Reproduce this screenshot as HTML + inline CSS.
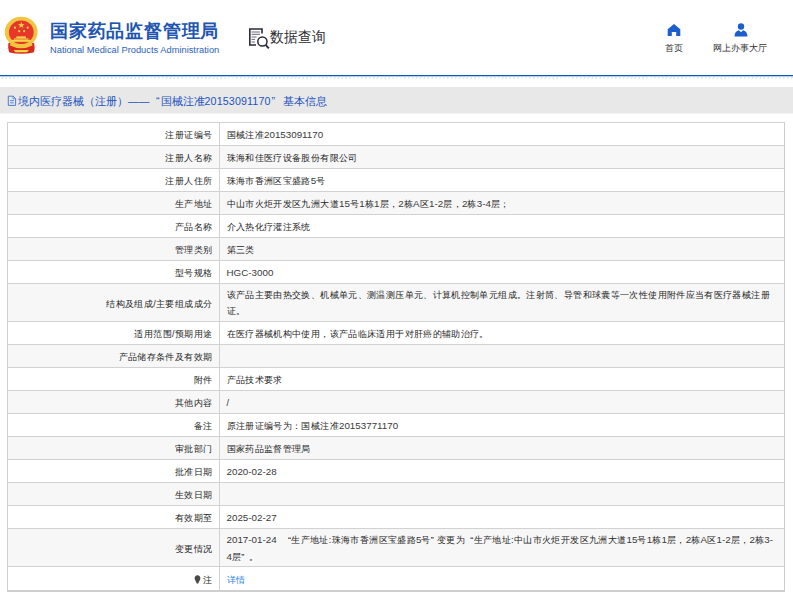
<!DOCTYPE html>
<html><head><meta charset="utf-8">
<style>
*{margin:0;padding:0;box-sizing:border-box}
html,body{width:793px;height:597px;overflow:hidden;background:#fff;font-family:"Liberation Sans",sans-serif;color:#333}
.a{position:absolute;white-space:nowrap}
.emblem{position:absolute;left:4px;top:17px;width:35px;height:38px}
.t1{left:50px;top:18.5px;font-size:18px;letter-spacing:0.8px;font-weight:bold;color:#2155b0;line-height:24px}
.t2{left:50px;top:45px;font-size:9.32px;color:#2d62b8;line-height:11px}
.sq{position:absolute;left:244px;top:22px;width:30px;height:30px}
.sqt{left:270px;top:25px;font-size:14px;color:#2c2c30;line-height:20px;transform:scaleY(1.1);transform-origin:0 0}
.nav{top:42px;font-size:9.33px;color:#333;line-height:12px}
.line{position:absolute;left:0;top:75px;width:793px;height:1px;background:#0a5cc0;box-shadow:0 1px 0 rgba(10,92,192,0.3)}
.hatch{position:absolute;left:0;top:77px;width:793px;height:2px;background:repeating-linear-gradient(125deg,#fff 0 2px,#e8e8e8 2px 3.2px)}
.crumb{position:absolute;left:0;top:87px;width:793px;height:26px;background:#e8e8e8;box-shadow:0 1px 0 #f3f3f3}
.cr{top:8px;font-size:10.67px;color:#1b52c0;line-height:12px}
.tbl{position:absolute;left:7px;top:122px;width:778px;height:469px;border:1px solid #cfcfcf;border-top-width:1px}
.r{position:absolute;left:7px;width:777px;border-top:1px solid #d2d2d2;font-size:9px;letter-spacing:0.37px;color:#262626}
.k{position:absolute;left:0;top:0;width:212.5px;border-right:1px solid #d2d2d2;text-align:right;padding-right:6.2px;display:flex;align-items:center;justify-content:flex-end;white-space:nowrap}
.v{position:absolute;left:212.5px;top:0;width:565px;padding-left:7px;display:flex;align-items:center;line-height:15.6px;white-space:nowrap}
.k>div,.v>div{position:relative;top:1px}
.lnk{color:#2a7fe8}
.n{font-size:9.8px;letter-spacing:0;color:#3a3a3a}
.pin{width:7px;height:9px;margin-right:1.5px;vertical-align:middle;position:relative;top:-1px}
.tb{position:absolute;left:7px;top:590px;width:778px;height:2px;background:#cfcfcf}
.tl{position:absolute;left:7px;top:122px;width:1px;height:470px;background:#cfcfcf}
.trr{position:absolute;left:784px;top:122px;width:1px;height:470px;background:#cdcdcd}
</style></head><body>
<svg style="position:absolute;left:2px;top:14px" width="40" height="42" viewBox="2 14 40 42">
  <path d="M8.5 43 Q7.5 49 9.5 52.5 Q21.3 55 33.5 52.5 Q35.5 49 34 43 Z" fill="#dc2a1f"/>
  <ellipse cx="21.2" cy="32" rx="16.4" ry="15.2" fill="#f1c53f"/>
  <ellipse cx="21.3" cy="32.3" rx="12.4" ry="11.8" fill="#e7372a"/>
  <path d="M21.3 21.8l0.85 2.35h2.5l-2 1.5 0.75 2.4-2.1-1.5-2.1 1.5 0.75-2.4-2-1.5h2.5z" fill="#f7d648"/>
  <circle cx="15" cy="27.7" r="1.1" fill="#f7d648"/><circle cx="27.7" cy="27.7" r="1.1" fill="#f7d648"/>
  <circle cx="19.2" cy="31.2" r="1.1" fill="#f7d648"/><circle cx="24.1" cy="31.2" r="1.1" fill="#f7d648"/>
  <rect x="16.4" y="36.4" width="9.5" height="2" fill="#f7d648"/>
  <rect x="14" y="38.3" width="14.5" height="1.4" fill="#f3b94a"/>
  <rect x="11.8" y="39.8" width="19" height="2" fill="#f7d648"/>
  <path d="M10.5 43 Q21.3 48.5 32 43 L32.5 45.5 Q21.3 51 10 45.5Z" fill="#f1c53f"/>
  <path d="M13.5 50 h15.5 l-2 2.3 h-11.5z" fill="#f7d648"/>
</svg>
<div class="a t1">国家药品监督管理局</div>
<div class="a t2">National Medical Products Administration</div>
<svg class="sq" viewBox="244 22 30 30">
  <path d="M256 45H249.8V29H262V33.5" fill="none" stroke="#2b2b3b" stroke-width="1.6"/>
  <path d="M251.5 32h8.5M251.5 34.3h8.5M251.5 37h5M251.5 39.4h3.5M251.5 42h3.5" stroke="#5a5a68" stroke-width="0.9"/>
  <circle cx="262.4" cy="41.5" r="4.6" fill="none" stroke="#2b2b3b" stroke-width="1.5"/>
  <path d="M265.6 44.8L268.8 48.3" stroke="#2b2b3b" stroke-width="1.9"/>
</svg>
<div class="a sqt">数据查询</div>
<svg style="position:absolute;left:667px;top:23px" width="14" height="14" viewBox="667 23 14 14">
  <path d="M674 24L680.3 29.2V36H676.2V31.9H671.8V36H667.7V29.2Z" fill="#1c5fcc"/>
</svg>
<div class="a nav" style="left:664.5px">首页</div>
<svg style="position:absolute;left:733px;top:22px" width="16" height="16" viewBox="733 22 16 16">
  <circle cx="741" cy="26.5" r="3.2" fill="#1c5fcc"/>
  <path d="M734.5 36.5Q734.7 31 739 30.3L741 32.3L743 30.3Q747.3 31 747.5 36.5Z" fill="#1c5fcc"/>
</svg>
<div class="a nav" style="left:712.5px">网上办事大厅</div>
<div class="line"></div>
<div class="hatch"></div>
<div class="crumb">
  <svg style="position:absolute;left:6px;top:7px" width="12" height="13" viewBox="6 94 12 13">
    <path d="M8.3 96.2H13.2L15.6 98.6V105.4H8.3Z" fill="none" stroke="#4d7bd6" stroke-width="1"/>
    <path d="M13 96.2V98.8H15.6" fill="none" stroke="#4d7bd6" stroke-width="0.8"/>
    <path d="M10 100.6H13.9M10 102.8H13.9" stroke="#4d7bd6" stroke-width="0.9"/>
  </svg>
  <div class="a cr" style="left:18px">境内医疗器械（注册）——</div><div class="a cr" style="left:156px">“</div><div class="a cr" style="left:160.5px">国械注准<span style="letter-spacing:0.15px">20153091170</span></div><div class="a cr" style="left:271.5px">”</div><div class="a cr" style="left:282.5px">基本信息</div>
</div>
<div class="r" style="top:122px;height:23px;background:#fff"><div class="k" style="height:23px"><div>注册证编号</div></div><div class="v" style="height:23px"><div>国械注准<span class=n>20153091170</span></div></div></div>
<div class="r" style="top:145px;height:23px;background:#f7f7f7"><div class="k" style="height:23px"><div>注册人名称</div></div><div class="v" style="height:23px"><div>珠海和佳医疗设备股份有限公司</div></div></div>
<div class="r" style="top:168px;height:23px;background:#fff"><div class="k" style="height:23px"><div>注册人住所</div></div><div class="v" style="height:23px"><div>珠海市香洲区宝盛路<span class=n>5</span>号</div></div></div>
<div class="r" style="top:191px;height:23px;background:#f7f7f7"><div class="k" style="height:23px"><div>生产地址</div></div><div class="v" style="height:23px"><div>中山市火炬开发区九洲大道<span class=n>15</span>号<span class=n>1</span>栋<span class=n>1</span>层，<span class=n>2</span>栋<span class=n>A</span>区<span class=n>1-2</span>层，<span class=n>2</span>栋<span class=n>3-4</span>层；</div></div></div>
<div class="r" style="top:214px;height:23px;background:#fff"><div class="k" style="height:23px"><div>产品名称</div></div><div class="v" style="height:23px"><div>介入热化疗灌注系统</div></div></div>
<div class="r" style="top:237px;height:23px;background:#f7f7f7"><div class="k" style="height:23px"><div>管理类别</div></div><div class="v" style="height:23px"><div>第三类</div></div></div>
<div class="r" style="top:260px;height:23px;background:#fff"><div class="k" style="height:23px"><div>型号规格</div></div><div class="v" style="height:23px"><div><span class=n>HGC-3000</span></div></div></div>
<div class="r" style="top:283px;height:38px;background:#f7f7f7"><div class="k" style="height:38px"><div>结构及组成/主要组成成分</div></div><div class="v" style="height:38px"><div>该产品主要由热交换、机械单元、测温测压单元、计算机控制单元组成。注射筒、导管和球囊等一次性使用附件应当有医疗器械注册<br>证。</div></div></div>
<div class="r" style="top:321px;height:23px;background:#fff"><div class="k" style="height:23px"><div>适用范围/预期用途</div></div><div class="v" style="height:23px"><div>在医疗器械机构中使用，该产品临床适用于对肝癌的辅助治疗。</div></div></div>
<div class="r" style="top:344px;height:23px;background:#f7f7f7"><div class="k" style="height:23px"><div>产品储存条件及有效期</div></div><div class="v" style="height:23px"><div></div></div></div>
<div class="r" style="top:367px;height:23px;background:#fff"><div class="k" style="height:23px"><div>附件</div></div><div class="v" style="height:23px"><div>产品技术要求</div></div></div>
<div class="r" style="top:390px;height:23px;background:#f7f7f7"><div class="k" style="height:23px"><div>其他内容</div></div><div class="v" style="height:23px"><div>/</div></div></div>
<div class="r" style="top:413px;height:23px;background:#fff"><div class="k" style="height:23px"><div>备注</div></div><div class="v" style="height:23px"><div>原注册证编号为：国械注准<span class=n>20153771170</span></div></div></div>
<div class="r" style="top:436px;height:23px;background:#f7f7f7"><div class="k" style="height:23px"><div>审批部门</div></div><div class="v" style="height:23px"><div>国家药品监督管理局</div></div></div>
<div class="r" style="top:459px;height:23px;background:#fff"><div class="k" style="height:23px"><div>批准日期</div></div><div class="v" style="height:23px"><div><span class=n>2020-02-28</span></div></div></div>
<div class="r" style="top:482px;height:23px;background:#f7f7f7"><div class="k" style="height:23px"><div>生效日期</div></div><div class="v" style="height:23px"><div></div></div></div>
<div class="r" style="top:505px;height:23px;background:#fff"><div class="k" style="height:23px"><div>有效期至</div></div><div class="v" style="height:23px"><div><span class=n>2025-02-27</span></div></div></div>
<div class="r" style="top:528px;height:38px;background:#f7f7f7"><div class="k" style="height:38px"><div>变更情况</div></div><div class="v" style="height:38px"><div><span class=n>2017-01-24</span> &nbsp;<span style=margin-left:5.6px></span>“生产地址:珠海市香洲区宝盛路<span class=n>5</span>号” 变更为 <span style=margin-left:2.2px></span>“生产地址:中山市火炬开发区九洲大道<span class=n>15</span>号<span class=n>1</span>栋<span class=n>1</span>层，<span class=n>2</span>栋<span class=n>A</span>区<span class=n>1-2</span>层，<span class=n>2</span>栋<span class=n>3-</span><br><span class=n>4</span>层”<span style=margin-left:4.5px></span>。</div></div></div>
<div class="r" style="top:566px;height:24px;background:#fff"><div class="k" style="height:24px"><div><svg class=pin viewBox="0 0 7 9"><path d="M3.5 0.2C1.6 0.2 0.6 1.6 0.6 3.3C0.6 5 2.2 6.3 2.7 8.4h1.6C4.8 6.3 6.4 5 6.4 3.3C6.4 1.6 5.4 0.2 3.5 0.2z" fill="#4a4a4a"/></svg>注</div></div><div class="v" style="height:24px"><div><span class=lnk style=position:relative;top:1px>详情</span></div></div></div>
<div class="tl"></div><div class="trr"></div>
<div class="tb"></div>
</body></html>
